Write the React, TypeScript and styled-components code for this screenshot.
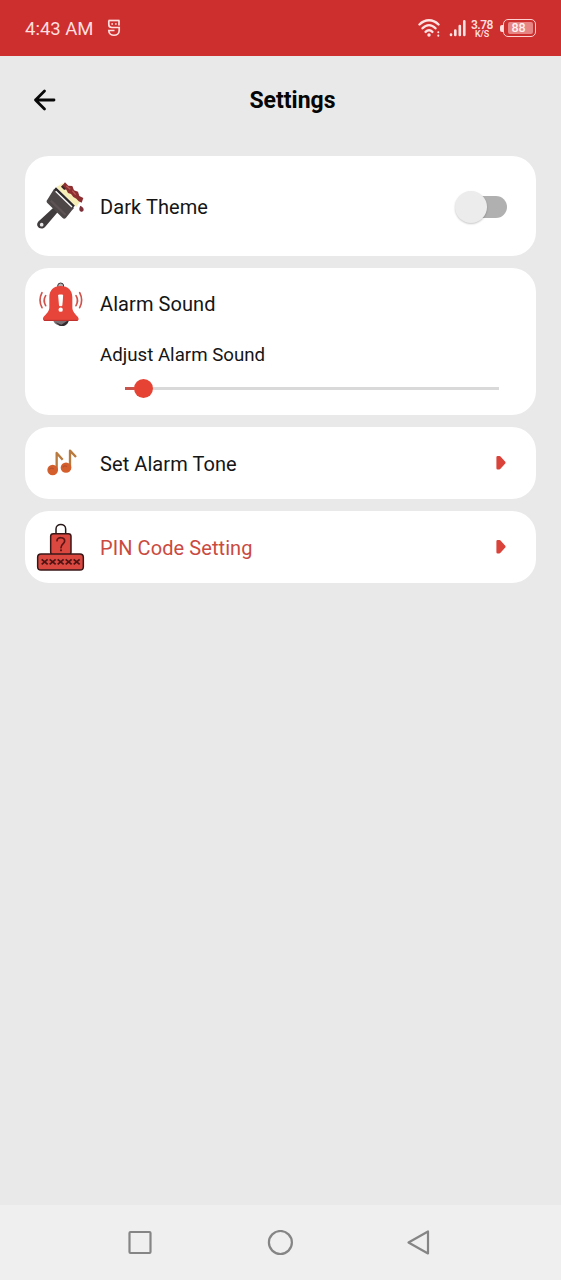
import type { FC, ReactNode } from "react";
import { useState } from "react";
import styled, { createGlobalStyle } from "styled-components";

const GlobalStyle = createGlobalStyle`
  body {
    margin: 0;
    background: #e9e9e9;
    font-family: Roboto, "Liberation Sans", sans-serif;
  }
  * {
    box-sizing: border-box;
  }
`;

const Screen = styled.div`
  display: flex;
  flex-direction: column;
  width: 100%;
  height: 1280px;
  background: #e9e9e9;
  color: #111;
`;

const StatusBar = styled.div`
  display: flex;
  align-items: center;
  height: 56px;
  padding: 0 25px;
  background: #cd2f2f;
  color: #ffdede;
  .clock {
    font-size: 18.5px;
    line-height: 22px;
    width: 82px;
    margin-top: 1px;
    white-space: nowrap;
  }
  .right {
    display: flex;
    align-items: center;
    margin-left: auto;
  }
  .signal {
    margin-left: 7px;
  }
  svg {
    display: block;
  }
`;

const NetSpeed = styled.div`
  width: 22px;
  margin: 1px 7px 0 4px;
  font-size: 12px;
  font-weight: 600;
  line-height: 12px;
  letter-spacing: -0.5px;
  text-align: center;
  small {
    display: block;
    font-size: 9px;
    line-height: 10px;
    margin-top: -2px;
    letter-spacing: -0.2px;
  }
`;

const Battery = styled.div`
  display: flex;
  align-items: center;
  &::before {
    content: "";
    width: 3px;
    height: 7px;
    border-radius: 2px 0 0 2px;
    background: #ffdede;
  }
  .shell {
    width: 33px;
    height: 18px;
    padding: 2px 2px 2px 4px;
    border: 1.5px solid #ffd0d0;
    border-radius: 5px;
  }
  .level {
    height: 12px;
    padding-right: 4px;
    border-radius: 2px;
    background: #e78585;
    color: #fff0f0;
    font-size: 12.5px;
    font-weight: 500;
    line-height: 12px;
    text-align: center;
  }
`;

const Header = styled.header`
  display: grid;
  grid-template-columns: 60px 1fr 60px;
  align-items: center;
  height: 88px;
  padding: 0 2px 0 26px;
  svg {
    display: block;
  }
  h1 {
    margin: 2px 0 0;
    font-size: 23px;
    font-weight: 700;
    line-height: 28px;
    text-align: center;
    color: #050505;
  }
`;

const BackButton = styled.button`
  width: 36px;
  height: 36px;
  padding: 0;
  border: 0;
  background: none;
`;

const List = styled.main`
  display: flex;
  flex-direction: column;
  gap: 12px;
  flex: 1;
  padding: 12px 25px;
`;

const Card = styled.section<{ $height: number }>`
  height: ${(props) => props.$height}px;
  border-radius: 24px;
  background: #fff;
`;

const Row = styled.div<{ $height: number; $accent?: boolean }>`
  display: flex;
  align-items: center;
  height: ${(props) => props.$height}px;
  padding: 0 29px 0 5px;
  color: ${(props) => (props.$accent ? "#cb4a3f" : "#151515")};
  .icon {
    width: 60px;
    height: 60px;
    margin-right: 10px;
  }
  .icon svg {
    display: block;
  }
  .label {
    font-size: 20px;
    line-height: 24px;
    letter-spacing: 0.08px;
  }
  .action {
    margin-left: auto;
  }
`;

/* single line rows that open another page */
const LinkRow = styled(Row)`
  .label {
    padding-top: 2px;
  }
`;

const SliderTitle = styled.div`
  margin-top: 3px;
  padding-left: 75px;
  font-size: 18.7px;
  line-height: 25px;
  color: #151515;
`;

const Slider = styled.input<{ $value: number }>`
  display: block;
  appearance: none;
  width: 374px;
  height: 20px;
  margin: 10px 0 0 99.5px;
  background: linear-gradient(#c6564d, #c6564d) 0 50% /
      ${(props) => props.$value}% 3px no-repeat,
    linear-gradient(#d9d9d9, #d9d9d9) 0 50% / 100% 3px no-repeat;
  &::-webkit-slider-thumb {
    appearance: none;
    width: 19px;
    height: 19px;
    border-radius: 50%;
    background: #e64335;
  }
`;

const Switch = styled.button<{ $on: boolean }>`
  display: flex;
  align-items: center;
  width: 52px;
  height: 22px;
  padding: 0;
  border: 0;
  /* the track is thinner than the thumb */
  background: linear-gradient(#b0b0b0, #b0b0b0) 100% 0 / 43px 22px no-repeat;
  border-radius: 11px;
  &::after {
    content: "";
    width: 32px;
    height: 32px;
    margin-left: ${(props) => (props.$on ? "20px" : "0")};
    flex-shrink: 0;
    border-radius: 50%;
    background: #ececec;
    box-shadow: 0 1px 2px rgba(0, 0, 0, 0.22);
  }
`;

const NavBar = styled.nav`
  display: grid;
  grid-template-columns: 140px 1fr 140px;
  align-items: center;
  justify-items: center;
  height: 75px;
  padding: 0 71px 0 70px;
  background: #efefef;
  svg {
    display: block;
    fill: none;
    stroke: #858585;
    stroke-width: 2.2;
    stroke-linejoin: round;
  }
`;

const BrushIcon: FC = () => (
  <svg width="60" height="60" viewBox="0 6 180 180">
    <path
      d="M70 98 L84 110 L47 154 C40 164 27 162 23 154 C19 146 24 139 31 134 Z"
      fill="#403c3d"
    />
    <circle cx="35" cy="149" r="5.5" fill="#e8e6e6" />
    <path
      d="M72 42 L132 99 L126 106 L108 128 C105 132 101 132 98 129 L52 84 C49 81 49 77 52 74 Z"
      fill="#4e4748"
    />
    <path d="M62 77 L107 120" stroke="#5d5355" strokeWidth="7" />
    <path d="M75 40 L132 95" stroke="#2e2a2c" strokeWidth="9" />
    <path d="M77 49 L126 96" stroke="#f6f6f6" strokeWidth="4.5" />
    <path d="M79 36 L98 25 L153 76 L139 96 Z" fill="#f7efb8" />
    <path
      d="M95 34 L105 22 L115 32 L127 33 L132 46 L144 50 L148 63 L160 69 L155 83 L146 79 L139 71 L130 66 L123 57 L114 54 L109 44 L100 42 Z"
      fill="#8d2e31"
    />
    <path d="M109 33 L121 43 M127 47 L137 59" stroke="#b95a55" strokeWidth="4" />
    <path d="M95 33 L105 43" stroke="#3c2628" strokeWidth="6" />
    <path d="M151 92 C162 97 164 107 156 110 C147 110 146 102 151 92Z" fill="#7e3038" />
  </svg>
);

const BellIcon: FC = () => (
  <svg width="60" height="60" viewBox="0 12 180 180">
    <circle cx="92" cy="48" r="9" fill="#b9b1b1" stroke="#3a3436" strokeWidth="3" />
    <path d="M69 148 H117 C115 174 72 174 69 148Z" fill="#7b7073" />
    <path d="M76 157 L94 164 L116 150 C114 166 102 170 89 167Z" fill="#322b2e" />
    <path
      d="M92 48 C70 48 58 61 58 82 V112 C58 126 48 132 40 142 C37 148 39 153 46 153 H139 C146 153 148 148 144 142 C136 132 127 126 127 112 V82 C127 61 114 48 92 48Z"
      fill="#e7443a"
    />
    <path d="M42 151 H143" stroke="#b92f2d" strokeWidth="3" />
    <path d="M86 75 H98 L95.500 107 H88.500Z" fill="#fff" stroke="#fff" strokeWidth="3" strokeLinejoin="round" />
    <circle cx="92" cy="119" r="6.500" fill="#fff" />
    <g fill="none" stroke="#d0524b" strokeWidth="5" strokeLinecap="round">
      <path d="M47 77 Q38 91 47 107" />
      <path d="M36 68 Q24 91 36 113" />
      <path d="M138 77 Q147 91 138 107" />
      <path d="M149 68 Q161 91 149 113" />
    </g>
  </svg>
);

const NotesIcon: FC = () => (
  <svg width="60" height="60" viewBox="0 -6 180 180">
    <g fill="none" stroke="#b87a3e" strokeWidth="7" strokeLinejoin="round">
      <path d="M80 106 V54 L98 74" />
      <path d="M120 98 V47 L138 66" />
    </g>
    <ellipse cx="68" cy="105" rx="16" ry="15.500" fill="#d45f2d" />
    <ellipse cx="108" cy="98" rx="16" ry="15.500" fill="#d45f2d" />
    <path d="M58 104 q6 -8 13 -2 M98 97 q6 -8 13 -2" fill="none" stroke="#b9502c" strokeWidth="4" />
  </svg>
);

const PinIcon: FC = () => (
  <svg width="60" height="60" viewBox="0 6 180 180">
    <path
      d="M78 56 V42 C78 24 107 24 107 42 V56"
      fill="none"
      stroke="#27191a"
      strokeWidth="4.500"
    />
    <rect x="62" y="56" width="61" height="64" rx="8" fill="#db4840" stroke="#3a1717" strokeWidth="4.500" />
    <rect x="23" y="117" width="137" height="48" rx="10" fill="#db4840" stroke="#3a1717" strokeWidth="4.500" />
    <path
      d="M81 77 C81 65 104 65 104 78 C104 87 93 87 93 98"
      fill="none"
      stroke="#5b1515"
      strokeWidth="5"
      strokeLinecap="round"
    />
    <circle cx="93" cy="106" r="3.200" fill="#5b1515" />
    <g stroke="#4e1414" strokeWidth="5.500">
      {[44, 68, 92, 116, 140].map((x) => (
        <path key={x} d={`M${x - 9} 133 l18 15 m0 -15 l-18 15`} />
      ))}
    </g>
  </svg>
);

const Arrow: FC = () => (
  <svg className="action" width="12" height="16" viewBox="0 0 12 16">
    <path
      d="M2.700 2.200 H4.300 L9.300 7.700 L4.300 13.200 H2.700Z"
      fill="#d9433a"
      stroke="#d9433a"
      strokeWidth="2.600"
      strokeLinejoin="round"
    />
  </svg>
);

interface ISettingRow {
  icon: ReactNode;
  label: string;
  height: number;
  children?: ReactNode;
}

const SettingRow: FC<ISettingRow> = ({ icon, label, height, children }) => {
  return (
    <Row $height={height}>
      <div className="icon">{icon}</div>
      <div className="label">{label}</div>
      {children}
    </Row>
  );
};

interface ISettingLink {
  icon: ReactNode;
  label: string;
  accent?: boolean;
}

const SettingLink: FC<ISettingLink> = ({ icon, label, accent }) => {
  return (
    <Card $height={72}>
      <LinkRow $height={72} $accent={accent}>
        <div className="icon">{icon}</div>
        <div className="label">{label}</div>
        <Arrow />
      </LinkRow>
    </Card>
  );
};

const Status: FC = () => {
  return (
    <StatusBar>
      <div className="clock">4:43 AM</div>
      <svg width="14" height="18" viewBox="0 0 14 18" fill="none" stroke="#ffdede" strokeWidth="1.700">
        <path d="M1.500 1.500 H12.500" />
        <path d="M1.800 1.500 V5.500 C1.800 7.500 3 8.500 5 8.500 H12.200 V11.500 C12.200 17.800 1.800 17.800 1.800 11.500 H7.500" />
        <path d="M12 1.500 V6.500 M5.200 4.200 V5.800 M8.800 4.200 V5.800" />
      </svg>
      <div className="right">
        <svg width="24" height="20" viewBox="0 0 24 20" fill="none" stroke="#ffe2e2" strokeWidth="2.400" strokeLinecap="round">
          <path d="M1.500 6.500 C7 0.800 15 0.800 20.500 6.500" />
          <path d="M4.500 10.300 C8.500 6 13.500 6 17.500 10.300" />
          <path d="M7.600 13.900 C9.700 11.700 12.300 11.700 14.400 13.900" />
          <circle cx="11" cy="17" r="1.700" fill="#ffe2e2" stroke="none" />
          <path d="M20.300 14.200 V14.300 M20.300 17.600 V17.700" strokeWidth="2" />
        </svg>
        <svg className="signal" width="18" height="18" viewBox="0 0 18 18" fill="none" stroke="#ffe2e2" strokeWidth="2.600" strokeLinecap="round">
          <path d="M2 15.500 V16 M6.300 11.500 V16 M10.800 7 V16 M15.300 2.300 V16" />
        </svg>
        <NetSpeed>
          3.78<small>K/S</small>
        </NetSpeed>
        <Battery>
          <div className="shell">
            <div className="level">88</div>
          </div>
        </Battery>
      </div>
    </StatusBar>
  );
};

const App: FC = () => {
  const [dark, setDark] = useState(false);
  const [volume, setVolume] = useState(2.6);

  return (
    <>
      <GlobalStyle />
      <Screen>
        <Status />
        <Header>
          <BackButton aria-label="Back">
            <svg width="36" height="36" viewBox="0 0 36 36" fill="none" stroke="#080808" strokeWidth="2.800" strokeLinecap="round" strokeLinejoin="round">
              <path d="M28 18 H9.500 M18.500 9 L9.500 18 L18.500 27" />
            </svg>
          </BackButton>
          <h1>Settings</h1>
        </Header>
        <List>
          <Card $height={100}>
            <SettingRow icon={<BrushIcon />} label="Dark Theme" height={101}>
              <Switch
                className="action"
                aria-label="Dark Theme"
                $on={dark}
                onClick={() => setDark(!dark)}
              />
            </SettingRow>
          </Card>
          <Card $height={147}>
            <SettingRow icon={<BellIcon />} label="Alarm Sound" height={72} />
            <SliderTitle>Adjust Alarm Sound</SliderTitle>
            <Slider
              type="range"
              min={0}
              max={100}
              step={0.1}
              aria-label="Adjust Alarm Sound"
              value={volume}
              $value={volume}
              onChange={(e) => setVolume(Number(e.target.value))}
            />
          </Card>
          <SettingLink icon={<NotesIcon />} label="Set Alarm Tone" />
          <SettingLink icon={<PinIcon />} label="PIN Code Setting" accent />
        </List>
        <NavBar>
          <svg width="26" height="26" viewBox="0 0 26 26">
            <rect x="2.500" y="2" width="21" height="21" rx="1" />
          </svg>
          <svg width="26" height="26" viewBox="0 0 26 26">
            <circle cx="13.400" cy="12.500" r="11.500" />
          </svg>
          <svg width="26" height="26" viewBox="0 0 26 26">
            <path d="M21 1.500 V23.500 L1.500 12.500Z" />
          </svg>
        </NavBar>
      </Screen>
    </>
  );
};
export default App;
